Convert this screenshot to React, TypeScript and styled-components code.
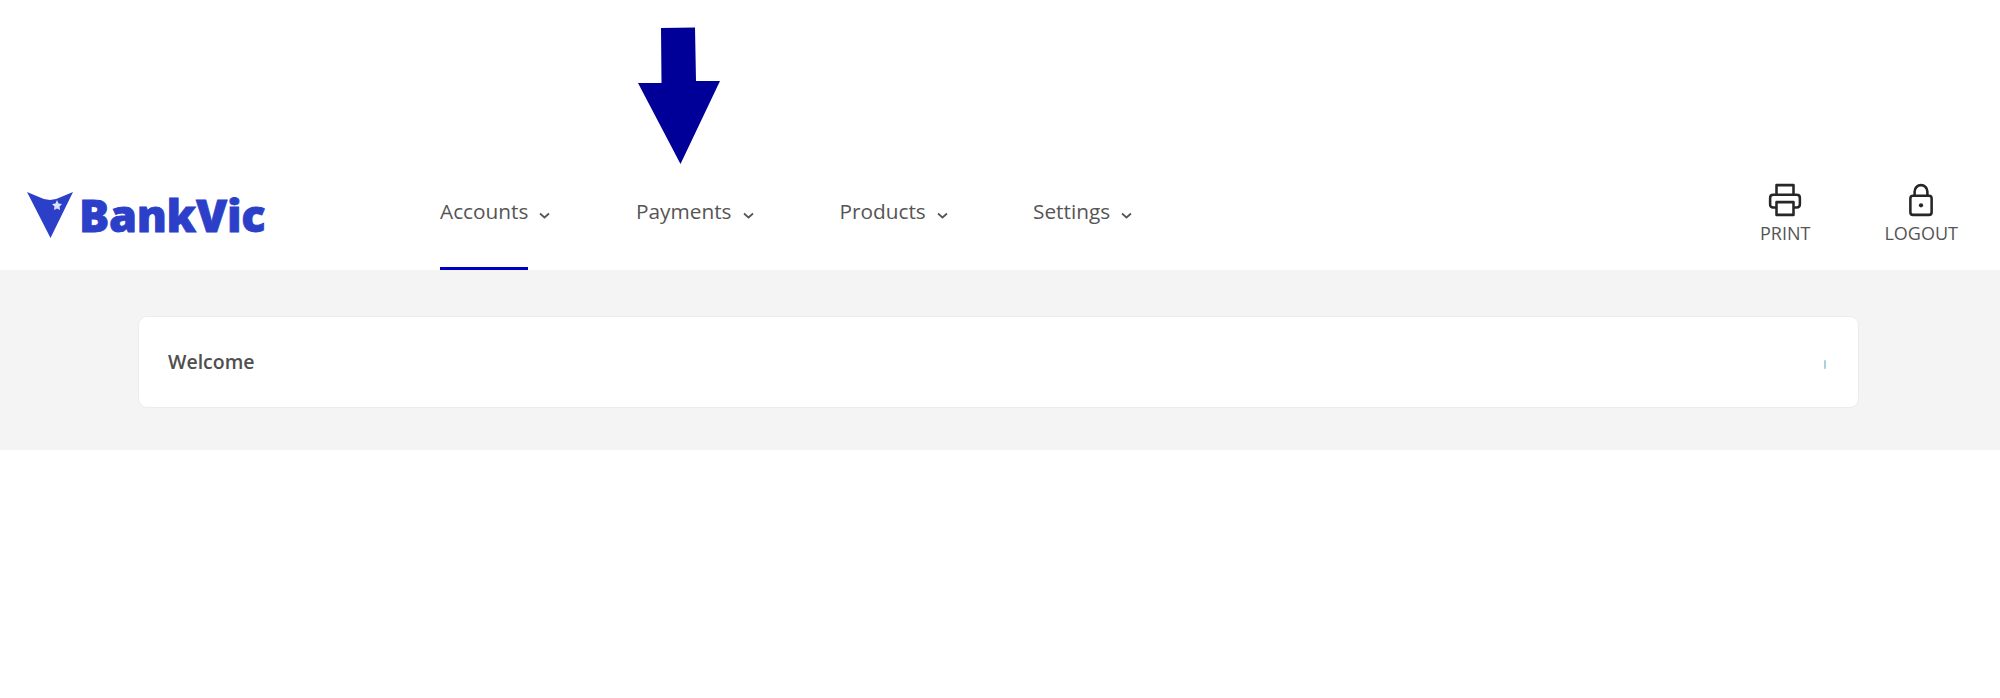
import React from 'react';
import styled, {createGlobalStyle} from 'styled-components';

const GlobalStyle = createGlobalStyle`
    html, body {
        margin: 0;
        padding: 0;
        background: #ffffff;
        font-family: "Open Sans", "Liberation Sans", sans-serif;
    }
`;

const Page = styled.div`
    position: relative;
    width: 2000px;
    height: 698px;
    overflow: hidden;
    background: #ffffff;
`;

const Header = styled.header`
    height: 270px;
    box-sizing: border-box;
    padding: 170px 42px 0 27px;
    display: flex;
    align-items: stretch;
`;

const Logo = styled.div`
    width: 413px;
    height: 100px;
    display: flex;
    align-items: center;
    gap: 6px;
    padding-bottom: 12px;
    box-sizing: border-box;
`;

const LogoText = styled.span`
    font-family: "Open Sans", "Liberation Sans", sans-serif;
    font-size: 45px;
    font-weight: 800;
    line-height: 1;
    color: #2b3fc9;
    letter-spacing: -0.3px;
    -webkit-text-stroke: 0.8px #2b3fc9;
`;

const Nav = styled.nav`
    display: flex;
    flex: 1;
`;

const NavItem = styled.a<{$width: number}>`
    width: ${({$width}) => $width}px;
    height: 100px;
    box-sizing: border-box;
    padding-top: 27px;
    display: flex;
    align-items: flex-start;
    gap: 11px;
    font-size: 20.8px;
    line-height: 28px;
    color: #555555;
`;

const NavLabel = styled.span<{$active?: boolean}>`
    height: 73px;
    box-sizing: border-box;
    border-bottom: 3px solid ${({$active}) => ($active ? '#0000c4' : 'transparent')};
`;

const Chevron = styled.svg`
    width: 11px;
    height: 7px;
    margin-top: 15px;
    fill: none;
    stroke: #555555;
    stroke-width: 1.7;
`;

const Actions = styled.div`
    display: flex;
    gap: 74px;
`;

const Action = styled.button`
    border: none;
    background: none;
    padding: 13px 0 0;
    height: 76px;
    display: flex;
    flex-direction: column;
    align-items: center;
    font-family: inherit;
    font-size: 18px;
    line-height: 24px;
    color: #555555;
    text-transform: uppercase;
`;

const ActionIcon = styled.svg`
    width: 34px;
    height: 34px;
    margin-bottom: 4px;
    fill: none;
    stroke: #262626;
    stroke-width: 2.4;
    stroke-linejoin: round;
`;

const Band = styled.section`
    height: 180px;
    box-sizing: border-box;
    padding: 46px 141px 42px 138px;
    background: #f4f4f4;
`;

const Card = styled.div`
    height: 92px;
    box-sizing: border-box;
    padding: 0 32px 0 29px;
    display: flex;
    align-items: center;
    justify-content: space-between;
    background: #ffffff;
    border: 1px solid #ececec;
    border-radius: 9px;
`;

const Title = styled.span`
    font-size: 19.500px;
    font-weight: 600;
    margin-top: -2px;
    color: #4f4f4f;
`;

const Spinner = styled.span`
    width: 2px;
    height: 9px;
    margin-top: 4px;
    background: #a9cfe0;
    border-radius: 1px;
`;

const Arrow = styled.svg`
    position: absolute;
    left: 630px;
    top: 20px;
    width: 100px;
    height: 150px;
    fill: #000099;
`;

const navItems = [
    {label: 'Accounts', width: 196, active: true},
    {label: 'Payments', width: 203.5},
    {label: 'Products', width: 193.5},
    {label: 'Settings', width: 160},
];

export default function App() {
    return (
        <Page>
            <GlobalStyle />
            <Header>
                <Logo>
                    <svg width="46" height="47" viewBox="0 0 46 47">
                        <path d="M0 1 L12 6 Q23 12 34 6 L46 1 L23.500 47 Z" fill="#2b3fc9" />
                        <path d="M30 9 L31.500 12.500 L35 13 L32.500 15.500 L33 19 L30 17.500 L27 19 L27.500 15.500 L25 13 L28.500 12.500 Z" fill="#dfe3f8" />
                    </svg>
                    <LogoText>BankVic</LogoText>
                </Logo>
                <Nav>
                    {navItems.map(item => (
                        <NavItem key={item.label} $width={item.width}>
                            <NavLabel $active={item.active}>{item.label}</NavLabel>
                            <Chevron viewBox="0 0 11 7">
                                <path d="M1 1.500 L5.500 5.500 L10 1.500" />
                            </Chevron>
                        </NavItem>
                    ))}
                </Nav>
                <Actions>
                    <Action>
                        <ActionIcon viewBox="0 0 32 32">
                            <path d="M8 11 V2 H24 V11" />
                            <path d="M8 23 H5 Q2 23 2 20 V14 Q2 11 5 11 H27 Q30 11 30 14 V20 Q30 23 27 23 H24" />
                            <path d="M8 18 H24 V30 H8 Z" />
                        </ActionIcon>
                        Print
                    </Action>
                    <Action>
                        <ActionIcon viewBox="0 0 32 32">
                            <rect x="6" y="12" width="20" height="18" rx="2.500" />
                            <path d="M10 12 V8 A6 6 0 0 1 22 8 V12" />
                            <circle cx="16" cy="21" r="2" fill="#262626" stroke="none" />
                        </ActionIcon>
                        Logout
                    </Action>
                </Actions>
            </Header>
            <Band>
                <Card>
                    <Title>Welcome</Title>
                    <Spinner />
                </Card>
            </Band>
            <Arrow viewBox="0 0 100 150">
                <path d="M31 8 L65 7.500 L66 61 L90 61 L50.500 144 L8 63 L31.500 63 Z" />
            </Arrow>
        </Page>
    );
}
